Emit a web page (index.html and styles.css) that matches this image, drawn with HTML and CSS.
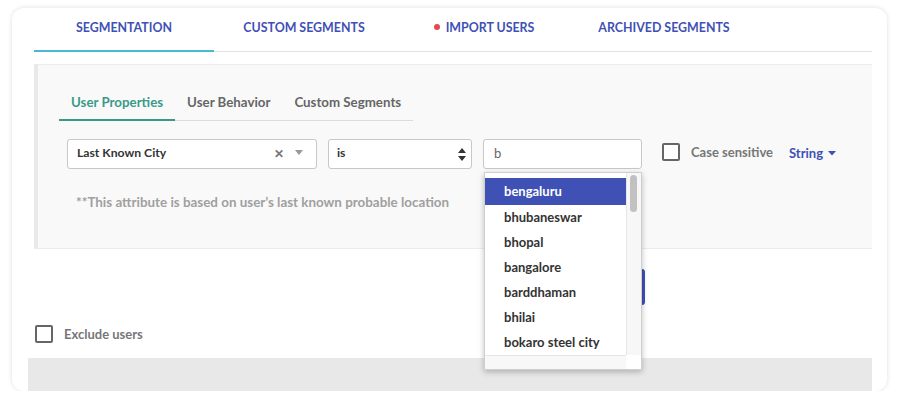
FILE: index.html
```html
<!DOCTYPE html>
<html>
<head>
<meta charset="utf-8">
<link rel="stylesheet" href="styles.css">
</head>
<body>
<div class="card">
  <nav class="tabs">
    <div class="tab active">SEGMENTATION</div>
    <div class="tab">CUSTOM SEGMENTS</div>
    <div class="tab"><span class="dot"></span>IMPORT USERS</div>
    <div class="tab">ARCHIVED SEGMENTS</div>
  </nav>
  <section class="panel">
    <div class="subtabs">
      <div class="subtab active">User Properties</div>
      <div class="subtab">User Behavior</div>
      <div class="subtab">Custom Segments</div>
    </div>
    <div class="filter-row">
      <div class="select attr">
        <span class="sel-text">Last Known City</span>
        <span class="clear">&#x2715;</span>
        <svg class="tri" width="8" height="6" viewBox="0 0 8 6"><path d="M0 0h8L4 5z" fill="#999"/></svg>
      </div>
      <div class="select op">
        <span class="sel-text">is</span>
        <svg class="spin" width="8" height="13" viewBox="0 0 8 13"><path d="M4 0L8 5H0z M0 8h8L4 13z" fill="#333"/></svg>
      </div>
      <div class="value-wrap">
        <div class="input">b</div>
        <div class="dropdown">
          <div class="dd-body">
            <ul class="dd-list">
              <li class="hl">bengaluru</li>
              <li>bhubaneswar</li>
              <li>bhopal</li>
              <li>bangalore</li>
              <li>barddhaman</li>
              <li>bhilai</li>
              <li>bokaro steel city</li>
            </ul>
            <div class="vscroll"><div class="thumb"></div></div>
          </div>
          <div class="dd-foot">
            <div class="hscroll"></div>
            <div class="corner"></div>
          </div>
        </div>
      </div>
      <label class="check case"><span class="box"></span>Case sensitive</label>
      <div class="type">String <svg width="8" height="5" viewBox="0 0 8 5"><path d="M0 0h8L4 4.5z" fill="#3f51b5"/></svg></div>
    </div>
    <p class="note">**This attribute is based on user’s last known probable location</p>
  </section>
  <div class="actions"><button class="btn" aria-label="Search"></button></div>
  <label class="check exclude"><span class="box"></span>Exclude users</label>
  <div class="footer-bar"></div>
</div>
</body>
</html>
```
FILE: styles.css
```css
* { box-sizing: border-box; }
html, body { margin: 0; padding: 0; background: #fff; }
body {
  font-family: "Lato", "Open Sans", sans-serif;
  color: #333;
  padding: 8px 13px 0 12px;
}
.card {
  position: relative;
  height: 383px;
  background: #fff;
  border-radius: 12px;
  box-shadow: 0 0 5px rgba(0,0,0,0.13);
  display: flex;
  flex-direction: column;
}
.tabs {
  display: flex;
  margin: 0 15px 0 22px;
  border-bottom: 1px solid #e2e2e2;
}
.tab {
  width: 180px;
  height: 44px;
  margin-bottom: -1px;
  padding-top: 12px;
  line-height: 16px;
  font-size: 12.4px;
  font-weight: 700;
  color: #3f51b5;
  text-align: center;
  border-bottom: 2px solid transparent;
  white-space: nowrap;
}
.tab.active { border-bottom-color: #4cb9d2; }
.dot {
  display: inline-block;
  width: 6px; height: 6px;
  border-radius: 50%;
  background: #e5484d;
  margin-right: 6px;
  vertical-align: 2px;
}
.panel {
  margin: 12px 15px 0 22px;
  height: 185px;
  background: #f9f9f9;
  border-top: 1px solid #ececec;
  border-bottom: 1px solid #ececec;
  border-left: 4px solid #e9e9e9;
  padding-top: 20px;
}
.subtabs {
  display: flex;
  margin-left: 21px;
  width: max-content;
  border-bottom: 1px solid #dcdcdc;
}
.subtab {
  padding: 9px 12px 9px;
  line-height: 16px;
  font-size: 13.3px;
  font-weight: 700;
  color: #666;
  border-bottom: 2px solid transparent;
  margin-bottom: -1px;
  white-space: nowrap;
}
.subtab.active { color: #3a9a89; border-bottom-color: #3a9a89; }
.filter-row {
  display: flex;
  align-items: center;
  margin-top: 18px;
  padding-left: 29px;
  height: 30px;
}
.select {
  height: 30px;
  background: #fff;
  border: 1px solid #c8c8c8;
  border-radius: 3px;
  display: flex;
  align-items: center;
  font-size: 12.2px;
  font-weight: 700;
  color: #333;
}
.sel-text { flex: 1; margin-top: -3px; }
.attr { width: 250px; padding: 0 13px 0 9px; }
.clear { font-size: 12px; color: #777; margin-right: 11px; margin-top: -2px; }
.tri { margin-top: -2px; }
.op { width: 144px; margin-left: 11px; padding: 0 5px 0 8px; }
.value-wrap { position: relative; margin-left: 11px; }
.input {
  width: 159px;
  height: 30px;
  background: #fff;
  border: 1px solid #c8c8c8;
  border-radius: 3px;
  padding-left: 10px;
  line-height: 26px;
  font-size: 13px;
  color: #666;
}
.dropdown {
  position: absolute;
  left: 1px;
  top: 33px;
  width: 158px;
  height: 198px;
  background: #fff;
  border: 1px solid #cfcfcf;
  box-shadow: 0 2px 6px rgba(0,0,0,0.25);
  z-index: 5;
  display: flex;
  flex-direction: column;
}
.dd-body { display: flex; height: 182px; }
.dd-list {
  list-style: none;
  margin: 0;
  padding: 5px 0 0;
  flex: 1;
  overflow: hidden;
}
.dd-list li {
  height: 25px;
  line-height: 25px;
  padding-left: 19px;
  font-size: 13px;
  font-weight: 700;
  color: #333;
  white-space: nowrap;
}
.dd-list li.hl { background: #3f51b5; color: #fff; height: 27px; line-height: 27px; }
.vscroll {
  width: 15px;
  background: #f7f7f7;
  border-left: 1px solid #e6e6e6;
  padding: 2px 0 0 3px;
}
.thumb { width: 7px; height: 37px; background: #c1c1c1; border-radius: 4px; }
.dd-foot { flex: 1; display: flex; }
.hscroll { flex: 1; background: #f8f8f8; border-top: 1px solid #e6e6e6; }
.corner { width: 15px; background: #fff; }
.check {
  display: flex;
  align-items: center;
  font-size: 13px;
  font-weight: 700;
  color: #777;
}
.box {
  width: 18px; height: 18px;
  border: 2px solid #666;
  border-radius: 2px;
  background: #fff;
  margin-right: 11px;
}
.case { margin-left: 20px; margin-top: -4px; }
.type {
  margin-left: 16px;
  margin-top: -2px;
  font-size: 13px;
  font-weight: 700;
  color: #3f51b5;
  display: flex;
  align-items: center;
  gap: 5px;
}
.note {
  margin: 25px 0 0 38px;
  font-size: 13.4px;
  line-height: 16px;
  font-weight: 700;
  color: #a0a0a0;
}
.actions {
  display: flex;
  justify-content: flex-start;
  margin-top: 20px;
  padding-left: 513px;
}
.btn {
  width: 120px;
  height: 36px;
  border: none;
  border-radius: 3px;
  background: #3f51b5;
}
.exclude { margin: 20px 0 0 23px; height: 18px; }
.footer-bar {
  margin: 15px 15px 0 16px;
  height: 33px;
  background: #e8e8e8;
}
```
